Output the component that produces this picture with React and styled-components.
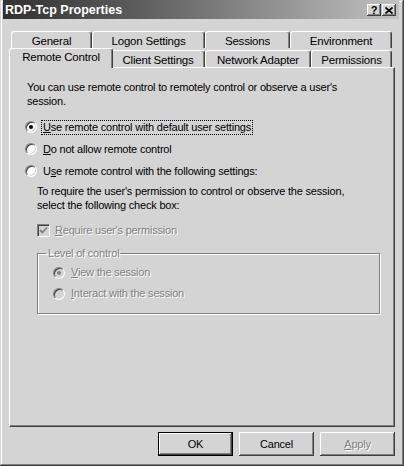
import React from 'react';
import styled, { createGlobalStyle, css } from 'styled-components';

const GlobalStyle = createGlobalStyle`
  html, body {
    margin: 0;
    padding: 0;
    background: #d4d4d4;
  }
  body {
    font-family: "Liberation Sans", Arial, sans-serif;
    font-size: 11px;
    letter-spacing: -0.2px;
    color: #000;
  }
`;

const raised = css`
  box-shadow:
    inset -1px -1px #404040,
    inset 1px 1px #ffffff,
    inset -2px -2px #808080,
    inset 2px 2px #d4d4d4;
`;

const disabledText = css`
  color: #808080;
  text-shadow: 1px 1px 0 #ffffff;
`;

const Window = styled.div`
  width: 404px;
  height: 466px;
  box-sizing: border-box;
  padding: 0 5px 0 3px;
  display: flex;
  flex-direction: column;
  background: #d4d4d4;
  box-shadow:
    inset -1px -1px #404040,
    inset 1px 1px #d4d4d4,
    inset -2px -2px #808080,
    inset 2px 2px #ffffff;
`;

const TitleBar = styled.div`
  height: 19px;
  display: flex;
  align-items: center;
  padding: 0 3px 0 2px;
  background: linear-gradient(to right, #303030 0%, #5e5e5e 35%, #c2c2c2 100%);
`;

const Title = styled.div`
  flex: 1;
  color: #fff;
  font-weight: bold;
  font-size: 12.5px;
  letter-spacing: 0;
`;

const TitleButtons = styled.div`
  display: flex;
  gap: 1px;
  margin-top: 1px;
`;

const TitleButton = styled.div`
  width: 14px;
  height: 12px;
  background: #d4d4d4;
  display: flex;
  align-items: center;
  justify-content: center;
  font-weight: bold;
  font-size: 11px;
  line-height: 12px;
  letter-spacing: 0;
  ${raised};
`;

const Content = styled.div`
  flex: 1;
  display: flex;
  flex-direction: column;
  padding: 12px 4px 0 6px;
`;

const TabRow = styled.div`
  display: flex;
  align-items: flex-end;
  height: ${({ h }) => h}px;
  padding-left: 2px;
  position: relative;
  z-index: ${({ front }) => (front ? 2 : 1)};
`;

const Tab = styled.div`
  box-sizing: border-box;
  width: ${({ w }) => w}px;
  height: 17px;
  display: flex;
  align-items: center;
  justify-content: center;
  background: #d4d4d4;
  border-top: 1px solid #fff;
  border-left: 1px solid #fff;
  border-right: 1px solid #404040;
  border-radius: 3px 3px 0 0;
  box-shadow: inset -1px 0 #808080;
  white-space: nowrap;
  padding-top: 1px;
  font-size: 11.5px;

  ${({ selected }) => selected && css`
    height: 20px;
    margin: 0 -2px -1px;
    width: ${({ w }) => w + 4}px;
    position: relative;
    z-index: 3;
    padding-top: 0;
    padding-bottom: 3px;
  `}
`;

const Panel = styled.div`
  height: 360px;
  box-sizing: border-box;
  border-top: 1px solid #fff;
  border-left: 1px solid #fff;
  border-right: 1px solid #404040;
  border-bottom: 1px solid #404040;
  box-shadow: inset -1px -1px #808080;
  padding: 12px 0 0 15px;
  display: flex;
  flex-direction: column;
`;

const Para = styled.p`
  margin: 0 0 0 ${({ indent }) => (indent ? 12 : 2)}px;
  line-height: 14px;
  width: ${({ w }) => w}px;
`;

const Option = styled.div`
  display: flex;
  align-items: center;
  height: ${({ h }) => h || 22}px;
  ${({ indent }) => indent && 'margin-left: 12px;'}
  ${({ disabled }) => disabled && disabledText};
`;

const RadioDot = styled.span`
  box-sizing: border-box;
  width: 12px;
  height: 12px;
  border-radius: 50%;
  border: 1px solid;
  border-color: #808080 #ffffff #ffffff #808080;
  background: ${({ disabled }) => (disabled ? '#d4d4d4' : '#ffffff')};
  box-shadow: inset 1px 1px #404040, inset -1px -1px #d4d4d4;
  display: flex;
  align-items: center;
  justify-content: center;
  margin-right: 5px;
  flex: none;
  text-shadow: none;

  &::after {
    content: '';
    width: 4px;
    height: 4px;
    border-radius: 50%;
    background: ${({ disabled }) => (disabled ? '#808080' : '#000')};
    display: ${({ checked }) => (checked ? 'block' : 'none')};
  }
`;

const CheckBox = styled.span`
  box-sizing: border-box;
  width: 13px;
  height: 13px;
  border: 1px solid;
  border-color: #808080 #ffffff #ffffff #808080;
  box-shadow: inset 1px 1px #404040, inset -1px -1px #d4d4d4;
  background: #d4d4d4;
  margin-right: 4px;
  display: flex;
  align-items: center;
  justify-content: center;
  flex: none;
`;

const Label = styled.span`
  padding: 0 1px;
  line-height: 13px;
  ${({ focused }) => focused && 'outline: 1px dotted #000; outline-offset: 0;'}
`;

const Key = styled.span`
  text-decoration: underline;
`;

const Group = styled.fieldset`
  margin: 5px 0 0 12px;
  padding: 2px 0 9px 15px;
  width: 343px;
  box-sizing: border-box;
  min-inline-size: 0;
  border: 1px solid #808080;
  box-shadow: 1px 1px 0 #fff, inset 1px 1px 0 #fff;
`;

const Legend = styled.legend`
  margin-left: -7px;
  padding: 0 1px 0 2px;
  line-height: 14px;
  ${disabledText};
`;

const ButtonRow = styled.div`
  display: flex;
  justify-content: flex-end;
  gap: 6px;
  margin-top: 5px;
`;

const Button = styled.div`
  box-sizing: border-box;
  width: 75px;
  height: 24px;
  display: flex;
  align-items: center;
  justify-content: center;
  background: #d4d4d4;
  ${raised};
  ${({ primary }) => primary && css`
    border: 1px solid #000;
  `}
  ${({ disabled }) => disabled && disabledText};
`;

function CloseGlyph() {
  return (
    <svg width="8" height="7" viewBox="0 0 8 7">
      <path d="M0.5 0.5 L7.5 6.5 M7.5 0.5 L0.5 6.5" stroke="#000" strokeWidth="1.6" fill="none" />
    </svg>
  );
}

function CheckGlyph() {
  return (
    <svg width="9" height="9" viewBox="0 0 9 9">
      <path d="M1 4 L3.5 6.5 L8 1.5" stroke="#808080" strokeWidth="1.8" fill="none" />
    </svg>
  );
}

const backTabs = [
  { label: 'General', w: 81 },
  { label: 'Logon Settings', w: 113 },
  { label: 'Sessions', w: 85 },
  { label: 'Environment', w: 102 }
];

const frontTabs = [
  { label: 'Remote Control', w: 100, selected: true },
  { label: 'Client Settings', w: 94 },
  { label: 'Network Adapter', w: 106 },
  { label: 'Permissions', w: 81 }
];

export default function App() {
  return (
    <>
      <GlobalStyle />
      <Window>
        <TitleBar>
          <Title>RDP-Tcp Properties</Title>
          <TitleButtons>
            <TitleButton>?</TitleButton>
            <TitleButton><CloseGlyph /></TitleButton>
          </TitleButtons>
        </TitleBar>
        <Content>
          <TabRow h={17}>
            {backTabs.map(t => <Tab key={t.label} w={t.w}>{t.label}</Tab>)}
          </TabRow>
          <TabRow h={19} front>
            {frontTabs.map(t => (
              <Tab key={t.label} w={t.w} selected={t.selected}>{t.label}</Tab>
            ))}
          </TabRow>
          <Panel>
            <Para w={330}>
              You can use remote control to remotely control or observe a user&apos;s session.
            </Para>
            <Option style={{ marginTop: 8 }}>
              <RadioDot checked />
              <Label focused><Key>U</Key>se remote control with default user settings</Label>
            </Option>
            <Option>
              <RadioDot />
              <Label><Key>D</Key>o not allow remote control</Label>
            </Option>
            <Option>
              <RadioDot />
              <Label>U<Key>s</Key>e remote control with the following settings:</Label>
            </Option>
            <Para indent w={325} style={{ marginTop: 2 }}>
              To require the user&apos;s permission to control or observe the session,
              select the following check box:
            </Para>
            <Option disabled indent style={{ marginTop: 7 }}>
              <CheckBox><CheckGlyph /></CheckBox>
              <Label><Key>R</Key>equire user&apos;s permission</Label>
            </Option>
            <Group>
              <Legend>Level of control</Legend>
              <Option disabled h={21}>
                <RadioDot checked disabled />
                <Label><Key>V</Key>iew the session</Label>
              </Option>
              <Option disabled h={21}>
                <RadioDot disabled />
                <Label><Key>I</Key>nteract with the session</Label>
              </Option>
            </Group>
          </Panel>
          <ButtonRow>
            <Button primary>OK</Button>
            <Button>Cancel</Button>
            <Button disabled><span><Key>A</Key>pply</span></Button>
          </ButtonRow>
        </Content>
      </Window>
    </>
  );
}
